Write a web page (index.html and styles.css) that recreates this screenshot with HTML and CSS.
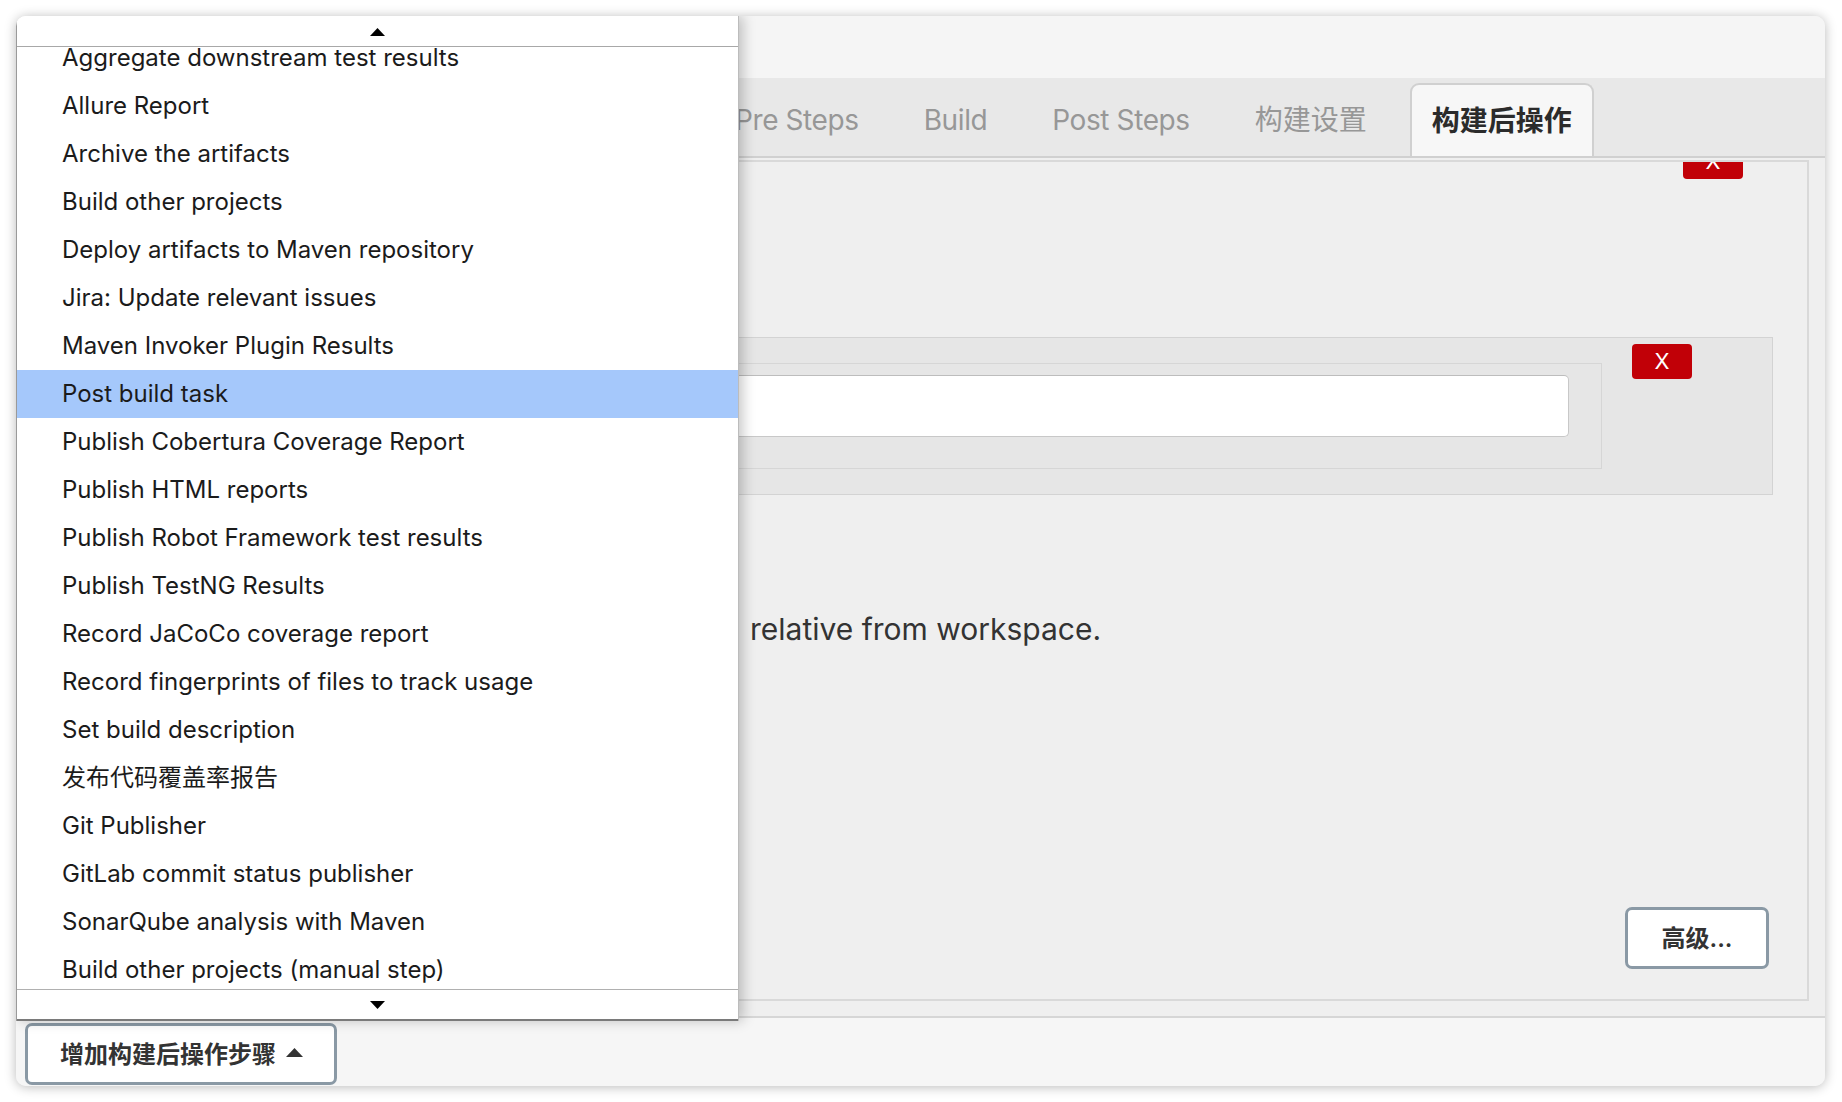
FILE: index.html
```html
<!DOCTYPE html>
<html lang="zh-CN">
<head>
<meta charset="utf-8">
<title>构建后操作</title>
<link rel="stylesheet" href="styles.css">
</head>
<body>
<div class="window">
  <div class="header"></div>
  <div class="tabbar">
    <div class="tab latin">Pre Steps</div>
    <div class="tab latin">Build</div>
    <div class="tab latin">Post Steps</div>
    <div class="tab">构建设置</div>
    <div class="tab active">构建后操作</div>
  </div>
  <div class="content">
    <div class="panel">
      <button class="del del-top">X</button>
      <div class="section">
        <div class="inner"><div class="input"></div></div>
        <button class="del">X</button>
      </div>
      <p class="help">relative from workspace.</p>
      <button class="btn adv">高级...</button>
    </div>
  </div>
  <div class="footer">
    <button class="btn add">增加构建后操作步骤<svg class="caret" width="17" height="9" viewBox="0 0 17 9"><path d="M8.5 0 L17 9 L0 9 Z" fill="#333"/></svg></button>
  </div>

  <div class="menu">
    <div class="menu-top"><svg width="15" height="8" viewBox="0 0 15 8"><path d="M7.5 0 L15 8 L0 8 Z" fill="#000"/></svg></div>
    <div class="menu-list">
      <ul>
        <li>Aggregate downstream test results</li>
        <li>Allure Report</li>
        <li>Archive the artifacts</li>
        <li>Build other projects</li>
        <li>Deploy artifacts to Maven repository</li>
        <li>Jira: Update relevant issues</li>
        <li>Maven Invoker Plugin Results</li>
        <li class="selected">Post build task</li>
        <li>Publish Cobertura Coverage Report</li>
        <li>Publish HTML reports</li>
        <li>Publish Robot Framework test results</li>
        <li>Publish TestNG Results</li>
        <li>Record JaCoCo coverage report</li>
        <li>Record fingerprints of files to track usage</li>
        <li>Set build description</li>
        <li>发布代码覆盖率报告</li>
        <li>Git Publisher</li>
        <li>GitLab commit status publisher</li>
        <li>SonarQube analysis with Maven</li>
        <li>Build other projects (manual step)</li>
      </ul>
    </div>
    <div class="menu-bottom"><svg width="15" height="8" viewBox="0 0 15 8"><path d="M0 0 L15 0 L7.5 8 Z" fill="#000"/></svg></div>
  </div>
</div>
</body>
</html>
```

FILE: styles.css
```css
* { box-sizing: border-box; }

html, body {
  margin: 0;
  padding: 0;
  background: #ffffff;
}

body {
  font-family: Inter, "Noto Sans CJK SC", sans-serif;
  color: #333;
  padding: 16px;
}

.window {
  position: relative;
  width: 1809px;
  height: 1070px;
  border-radius: 10px;
  overflow: hidden;
  background: #f5f5f5;
  box-shadow: 0 1px 12px rgba(0, 0, 0, 0.28);
  display: flex;
  flex-direction: column;
}

.header {
  height: 62px;
  background: #f5f5f5;
  flex: none;
}

.tabbar {
  height: 80px;
  flex: none;
  background: #e8e8e8;
  border-bottom: 2px solid #d0d0d0;
  display: flex;
  align-items: flex-end;
  gap: 21px;
  padding-left: 697px;
}

.tab {
  font-size: 28px;
  line-height: 74px;
  height: 73px;
  padding: 0 22px;
  color: #979797;
  white-space: nowrap;
}

.tab.latin {
  letter-spacing: -0.4px;
}

.tab.active {
  color: #2b2b2b;
  font-weight: 700;
  background: #f7f7f7;
  border: 2px solid #d0d0d0;
  border-bottom: 0;
  border-radius: 9px 9px 0 0;
  padding: 0 20px;
  line-height: 72px;
}

.content {
  flex: 1;
  display: flex;
  background: #efefef;
  border-bottom: 2px solid #d6d6d6;
  padding: 2px 16px 15px 16px;
}

.panel {
  flex: 1;
  display: flex;
  flex-direction: column;
  border: 2px solid #d9d9d9;
  background: #efefef;
  overflow: hidden;
}

.del {
  width: 60px;
  height: 35px;
  border: 0;
  border-radius: 4px;
  background: #c10007;
  color: #fff;
  font-family: Inter, sans-serif;
  font-size: 22px;
  line-height: 35px;
  padding: 0;
  flex: none;
}

.del-top {
  align-self: flex-end;
  margin: -18px 64px 0 0;
}

.section {
  margin: 158px 34px 0 24px;
  border: 1px solid #d3d3d3;
  background: #e6e6e6;
  display: flex;
  align-items: flex-start;
  gap: 30px;
  padding: 6px 80px 25px 24px;
}

.inner {
  flex: 1;
  margin-top: 19px;
  border: 1px solid #d6d6d6;
  padding: 11px 32px 31px 24px;
}

.input {
  height: 62px;
  background: #fff;
  border: 1px solid #c8c8c8;
  border-top-color: #bdbdbd;
  border-radius: 5px;
}

.help {
  margin: 114px 0 0 716px;
  font-size: 30px;
  line-height: 40px;
  color: #333;
}

.btn {
  font-family: Inter, "Noto Sans CJK SC", sans-serif;
  font-size: 24px;
  font-weight: 600;
  color: #333;
  background: #fff;
  border: 3px solid #8a99a5;
  border-radius: 7px;
  height: 62px;
  display: flex;
  align-items: center;
  padding-bottom: 4px;
}

.adv {
  width: 144px;
  justify-content: center;
  align-self: flex-end;
  margin: auto 38px 30px 0;
  padding-left: 0;
  padding-right: 0;
  padding-top: 0;
}

.footer {
  flex: none;
  height: 68px;
  background: #f6f6f6;
  padding: 5px 0 0 9px;
}

.add {
  width: 312px;
  padding-left: 32px;
  padding-top: 0;
  gap: 10px;
}

.caret {
  display: block;
  margin-top: 0;
}

/* dropdown menu */
.menu {
  position: absolute;
  left: 0;
  top: 0;
  width: 723px;
  height: 1005px;
  background: #fff;
  display: flex;
  flex-direction: column;
  border-right: 1px solid #bcbcbc;
  border-left: 1px solid #9a9a9a;
  box-shadow: 4px 0 12px rgba(0, 0, 0, 0.22);
  z-index: 5;
}

.menu-top,
.menu-bottom {
  flex: none;
  display: flex;
  justify-content: center;
  align-items: center;
  background: #fff;
}

.menu-top {
  height: 31px;
  border-bottom: 1px solid #a8a8a8;
  padding-top: 2px;
}

.menu-bottom {
  height: 32px;
  border-top: 1px solid #b0b0b0;
  border-bottom: 2px solid #7a7a7a;
}

.menu-top svg,
.menu-bottom svg {
  display: block;
}

.menu-list {
  flex: 1;
  overflow: hidden;
}

.menu-list ul {
  list-style: none;
  margin: -13px 0 0 0;
  padding: 0;
}

.menu-list li {
  height: 48px;
  line-height: 48px;
  padding-left: 45px;
  font-size: 24px;
  color: #1b1b1b;
  white-space: nowrap;
}

.menu-list li.selected {
  background: #a5c8fb;
}
```
